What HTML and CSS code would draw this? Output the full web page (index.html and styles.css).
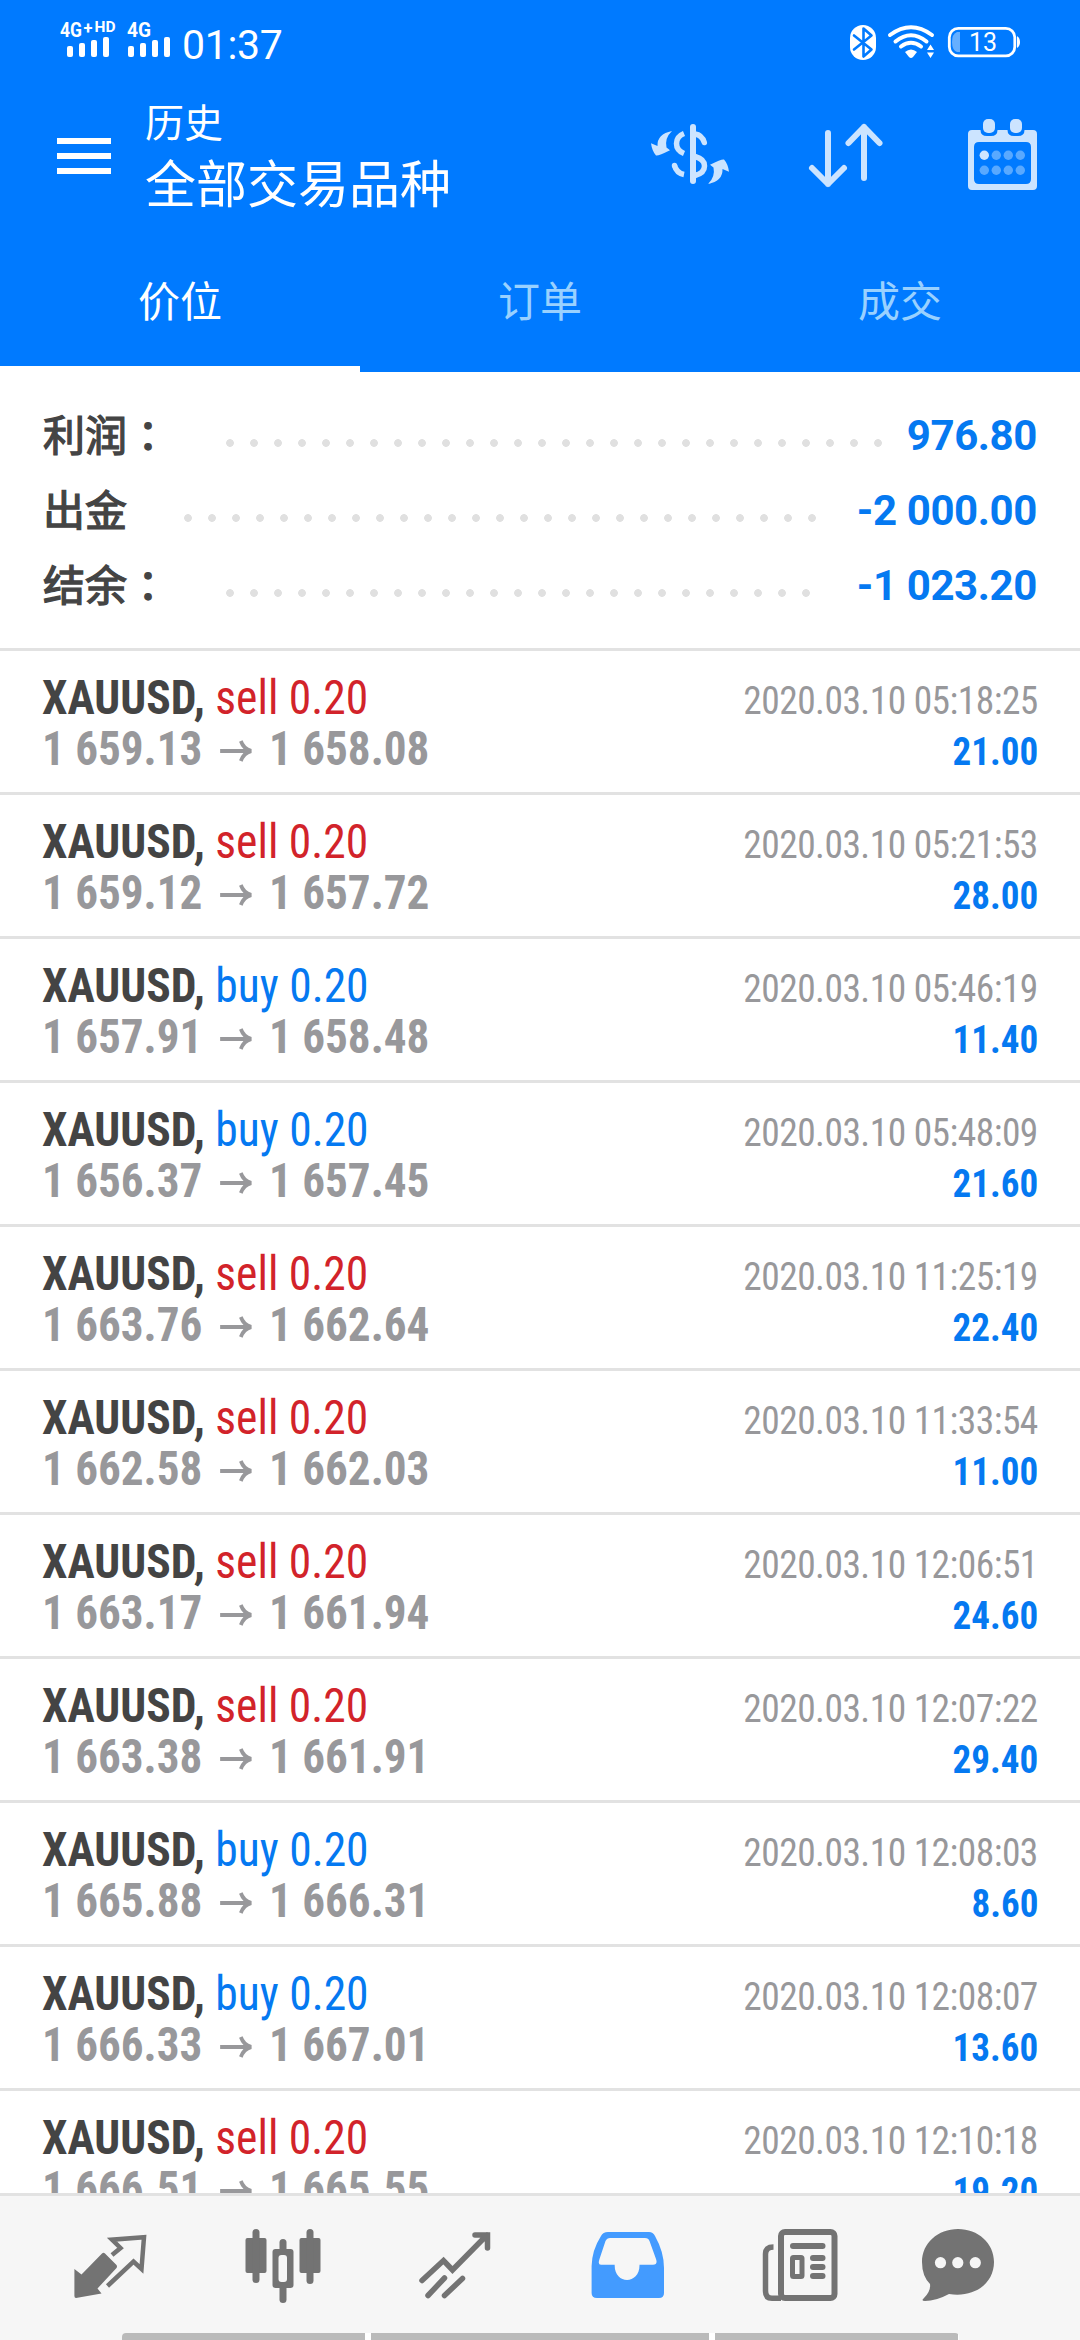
FILE: index.html
```html
<!DOCTYPE html>
<html lang="zh-CN">
<head>
<meta charset="utf-8">
<title>历史</title>
<link rel="stylesheet" href="styles.css">
</head>
<body>
<div class="screen">
  <header class="header">
    <div class="status">
      <svg class="signal" width="114" height="44" viewBox="58 16 114 44" fill="#fff">
        <g class="net">
          <text x="60" y="37" font-size="20" textLength="22" lengthAdjust="spacingAndGlyphs">4G</text>
          <text x="83.500" y="33.500" font-size="16" textLength="9" lengthAdjust="spacingAndGlyphs">+</text>
          <text x="94.500" y="32" font-size="14" textLength="21" lengthAdjust="spacingAndGlyphs">HD</text>
          <text x="127" y="37" font-size="20" textLength="24" lengthAdjust="spacingAndGlyphs">4G</text>
        </g>
        <rect x="67" y="46" width="6" height="11" rx="2"/><rect x="79" y="43" width="6" height="14" rx="2"/><rect x="91" y="40" width="6" height="17" rx="2"/><rect x="103" y="37" width="6" height="20" rx="2"/>
        <rect x="128" y="46" width="6" height="11" rx="2"/><rect x="140" y="43" width="6" height="14" rx="2"/><rect x="152" y="40" width="6" height="17" rx="2"/><rect x="164" y="37" width="6" height="20" rx="2"/>
      </svg>
      <span class="clock">01:37</span>
      <svg class="sys" width="174" height="40" viewBox="848 22 174 40">
        <rect x="850" y="25" width="26" height="35" rx="13" fill="#fff"/>
        <path d="M854 35.500 871.500 49.500 863.500 56.500V28.500L871.500 35.500 854 49.500" fill="none" stroke="#007aff" stroke-width="2.600" stroke-linejoin="round" stroke-linecap="round"/>
        <g fill="none" stroke="#fff" stroke-width="4" stroke-linecap="round"><path d="M890 35Q911 19.500 932 35"/><path d="M895.500 41.500Q911 29 926.500 41.500"/><path d="M901 46.500Q911 39 921 46.500"/></g>
        <path d="M905 52Q911 47 917 52L913 57Q911 59 909 57Z" fill="#fff"/>
        <path d="M927 50 930.500 44.500 934 50ZM927 52.500H934L930.500 58Z" fill="#fff"/>
        <rect x="949.300" y="28.300" width="65.500" height="27.500" rx="9" fill="none" stroke="#fff" stroke-width="2.800"/>
        <path d="M960 32V52H957Q952 50 952 42T957 32Z" fill="#fff" opacity=".4"/>
        <path d="M1017 36Q1020 38 1020 42T1017 48Z" fill="#fff"/>
        <text class="charge" x="983" y="51" text-anchor="middle">13</text>
      </svg>
    </div>
    <div class="appbar">
      <div class="menu"><i></i><i></i><i></i></div>
      <div class="titles">
        <div class="subtitle">历史</div>
        <div class="title">全部交易品种</div>
      </div>
      <div class="actions">
        <svg width="84" height="76" viewBox="648 117 84 76">
          <rect x="690" y="124" width="6" height="60" rx="3" fill="#cce4ff"/>
          <g fill="none" stroke="#cce4ff" stroke-width="5.500"><path d="M684 133.500Q676.500 136.500 676.500 143.500T684 153.500"/><path d="M695 134Q702 135 704.300 142.500" stroke-linecap="round"/><path d="M695 156.500Q704.500 159 704.500 166T695 175.500"/><path d="M684 174.500Q676.500 173 674.500 165.500"/></g>
          <circle cx="674.500" cy="165.500" r="2.700" fill="#cce4ff"/>
          <g fill="#cce4ff"><path id="swap" d="M672 131Q657 134 657.500 146L651 143.300Q652 151 656 155.500Q658 156.300 670 150.300L666.500 147.500Q664.500 138 672 131Z"/><use href="#swap" transform="rotate(180 690 157.500)"/></g>
        </svg>
        <svg width="80" height="76" viewBox="806 117 80 76" fill="none" stroke="#cce4ff" stroke-width="6" stroke-linecap="round" stroke-linejoin="round"><path d="M828 133V184M812 168 828 184 844 168M864 178V127M848.500 143 864 127 879.500 143"/></svg>
        <svg width="76" height="76" viewBox="965 117 76 76">
          <path fill="#cce4ff" fill-rule="evenodd" d="M972 130H1033Q1037 130 1037 134V186Q1037 190 1033 190H972Q968 190 968 186V134Q968 130 972 130ZM979 142Q974 142 974 147V179Q974 184 979 184H1026Q1031 184 1031 179V147Q1031 142 1026 142Z"/>
          <path fill="#007aff" d="M980.500 130H997.500Q997.500 136 991 136H987Q980.500 136 980.500 130ZM1007.500 130H1024.500Q1024.500 136 1018 136H1014Q1007.500 136 1007.500 130Z"/>
          <rect x="983" y="119" width="12" height="14" rx="5" fill="#cce4ff"/><rect x="1010" y="119" width="12" height="14" rx="5" fill="#cce4ff"/>
          <circle cx="984.300" cy="155.300" r="4.700" fill="#cce4ff"/>
          <g fill="#59a9ff"><circle cx="996.300" cy="155.300" r="4.700"/><circle cx="1008.300" cy="155.300" r="4.700"/><circle cx="1020.300" cy="155.300" r="4.700"/><circle cx="984.300" cy="170.300" r="4.700"/><circle cx="996.300" cy="170.300" r="4.700"/><circle cx="1008.300" cy="170.300" r="4.700"/><circle cx="1020.300" cy="170.300" r="4.700"/></g>
        </svg>
      </div>
    </div>
    <nav class="tabs"><div class="tab active">价位</div><div class="tab">订单</div><div class="tab">成交</div></nav>
  </header>

  <section class="summary">
    <div class="sum"><span class="label">利润<span class="colon" lang="zh-TW">：</span></span><span class="dots d28"></span><b>976.80</b></div>
    <div class="sum"><span class="label">出金</span><span class="dots d27"></span><b>-2 000.00</b></div>
    <div class="sum"><span class="label">结余<span class="colon" lang="zh-TW">：</span></span><span class="dots d25"></span><b>-1 023.20</b></div>
  </section>

  <main class="deals" id="deals"></main>

  <footer class="bottom">
    <nav class="nav">
      <svg width="80" height="80" viewBox="70 2226 80 80"><path fill="#737373" d="M74.400 2269 81.500 2274.500 102 2253.500Q103.500 2252 105 2253.500L116.500 2265Q117.500 2266.500 116.500 2268L97.500 2288.500 101.500 2293.500 76 2298Q74.400 2298 74.400 2296Z"/><path fill="none" stroke="#737373" stroke-width="4.500" d="M112 2255 120.500 2248 112 2239.700 144 2237.300 141.500 2269 133.500 2261.500 107.500 2286"/></svg>
      <svg width="80" height="80" viewBox="241.500 2226 80 80" fill="#737373"><rect x="244" y="2238" width="21" height="35" rx="2"/><rect x="251" y="2229" width="7" height="54" rx="3.500"/><rect x="298" y="2238" width="21" height="35" rx="2"/><rect x="305" y="2229" width="7" height="55" rx="3.500"/><rect x="278" y="2239" width="7" height="64" rx="3.500"/><rect x="271" y="2249" width="21" height="39" rx="3"/><rect x="277" y="2255" width="8.500" height="27" rx="3" fill="#f6f6f6"/></svg>
      <svg width="80" height="80" viewBox="414 2226 80 80" fill="none" stroke="#737373" stroke-width="5.500"><g stroke-linecap="round"><path d="M421 2280.500 442.500 2260.500 451.500 2270 486 2235M474 2235H486.500V2248"/><path d="M427 2295.500 443.500 2278M443.500 2295.500 461.500 2278.500"/></g></svg>
      <svg width="80" height="80" viewBox="587 2226 80 80"><path fill="#439bff" fill-rule="evenodd" d="M607 2232H648Q652 2232 654 2236Q663 2252 663 2268V2293Q663 2298 658 2298H596Q590.600 2298 590.600 2293V2266Q591 2250 600 2236Q602 2232 607 2232ZM609 2238Q606 2238 604.500 2241L598.500 2259Q596.500 2264.700 600 2264.700H613.700C613 2285 639 2285 638.500 2264.700H652Q657 2264.700 655 2259L648.500 2241Q647.500 2238 644 2238Z"/></svg>
      <svg width="80" height="80" viewBox="760 2226 80 80"><g fill="none" stroke="#737373"><rect x="781" y="2232" width="53.500" height="66" rx="4" stroke-width="6"/><path d="M773.500 2247Q765.500 2247 765.500 2254V2291Q765.500 2298.300 772 2298.300H781" stroke-width="5.500"/><rect x="792.500" y="2257.500" width="9.500" height="19" rx="1" stroke-width="5"/></g><g fill="#737373"><rect x="790" y="2243" width="35.500" height="6" rx="3"/><rect x="810" y="2255" width="15.500" height="6" rx="3"/><rect x="810" y="2264" width="15.500" height="6" rx="3"/><rect x="810" y="2273" width="15.500" height="6" rx="3"/></g></svg>
      <svg width="80" height="80" viewBox="918 2226 80 80"><path fill="#737373" d="M958 2229C978 2229 994 2243 994 2262C994 2283 975 2298 949 2294Q936 2301 925 2301Q920.500 2301 924 2298Q931 2291 930 2284Q922 2276 922 2262C922 2243 938 2229 958 2229Z"/><g fill="#f6f6f6"><circle cx="940.500" cy="2262.700" r="5.600"/><circle cx="957.800" cy="2262.700" r="5.600"/><circle cx="975.300" cy="2262.700" r="5.600"/></g></svg>
    </nav>
    <div class="gesture"><i></i><i></i><i></i></div>
  </footer>
</div>
<script src="deals.js"></script>
</body>
</html>
```
FILE: styles.css
```css
* { box-sizing: border-box; }
body { margin: 0; background: #fff; font-family: Roboto, "Noto Sans CJK SC", sans-serif; }
svg { display: block; flex: none; overflow: visible; }
.screen { width: 1080px; height: 2340px; display: flex; flex-direction: column; overflow: hidden; background: #fff; }

.header { height: 372px; flex: none; background: #007aff; color: #fff; display: flex; flex-direction: column; }
.status { height: 84px; display: flex; align-items: flex-start; padding: 16px 58px 0; }
.clock { font-size: 41px; line-height: 48px; margin: 5px 0 0 10px; letter-spacing: -0.3px; }
.sys { margin: 6px 0 0 auto; }
.net { font-weight: 700; }
.charge { font-size: 25px; fill: #fff; }

.appbar { height: 144px; display: flex; align-items: flex-start; padding: 0 39px 0 57px; }
.menu { width: 54px; margin-top: 54px; display: flex; flex-direction: column; gap: 9px; }
.menu i { height: 6px; background: #fff; }
.titles { margin-left: 34px; padding-top: 16px; }
.subtitle { font-size: 39px; line-height: 48px; }
.title { font-size: 51px; line-height: 76px; }
.actions { margin: 33px 0 0 auto; display: flex; }
.actions svg + svg { margin-left: 74px; }
.actions svg:last-child { margin-left: 79px; }

.tabs { flex: 1; display: grid; grid-template-columns: repeat(3, 1fr); }
.tab { text-align: center; font-size: 42px; line-height: 60px; padding-top: 45px; color: #99d1ff; }
.tab.active { color: #fff; border-bottom: 6px solid #fff; }

.summary { height: 276px; flex: none; padding: 26px 43px 0; }
.sum { height: 75px; display: flex; align-items: center; color: #444; font-size: 42px; line-height: 75px; }
.label { font-family: "Noto Sans CJK SC", sans-serif; margin-top: -6px; -webkit-text-stroke: 1.300px #444; }
.colon { font-family: "Noto Sans CJK TC", sans-serif; position: relative; top: 1px; }
.dots { height: 8px; margin: 15px 0 0 57px; background: radial-gradient(circle at 4px 4px, #e0e0e0 3.500px, transparent 4.200px) 0 0 / 24px 8px repeat-x; }
.d28 { width: 656px; }
.d27 { width: 632px; }
.d25 { width: 584px; }
.sum b { margin-left: auto; color: #0579f1; font-weight: 700; letter-spacing: -0.400px; }

.deals { flex: 1; min-height: 0; overflow: hidden; font-family: "Roboto Condensed", Roboto, sans-serif; font-stretch: 75%; }
.deal { height: 144px; border-top: 3px solid #e2e2e2; padding: 19px 42px 0; }
.line { display: flex; justify-content: space-between; height: 51px; line-height: 56px; font-size: 48px; white-space: nowrap; }
.name, .prices { transform-origin: left; }
.name { transform: scaleX(.948); }
.name b { color: #444; font-weight: 700; }
.sell { color: #d2232a; }
.buy { color: #0579f1; }
.prices { color: #98989b; font-weight: 700; transform: scaleX(.94); }
.arrow { width: 36px; height: 24px; display: inline-block; margin: 0 17px 0 18px; }
.date, .profit { font-size: 39px; line-height: 62px; transform-origin: right; }
.date { color: #98989b; letter-spacing: -0.550px; transform: scaleX(.96); }
.profit { font-weight: 700; color: #0579f1; transform: scaleX(.95); }

.bottom { height: 147px; flex: none; background: #f6f6f6; border-top: 3px solid #e2e2e2; display: flex; flex-direction: column; }
.nav { flex: 1; display: grid; grid-template-columns: repeat(5, 172.500px) 143px; justify-items: center; padding: 30px 0 0 24px; }
.gesture { height: 7px; display: flex; gap: 6px; margin: 0 121px 0 122px; background: #fff; border-radius: 4px 4px 0 0; overflow: hidden; }
.gesture i { background: #bababa; width: 243px; }
.gesture i:nth-child(2) { width: 338px; }
```
FILE: deals.js
```js
const deals = [
  ["sell", "1 659.13", "1 658.08", "05:18:25", "21.00"],
  ["sell", "1 659.12", "1 657.72", "05:21:53", "28.00"],
  ["buy", "1 657.91", "1 658.48", "05:46:19", "11.40"],
  ["buy", "1 656.37", "1 657.45", "05:48:09", "21.60"],
  ["sell", "1 663.76", "1 662.64", "11:25:19", "22.40"],
  ["sell", "1 662.58", "1 662.03", "11:33:54", "11.00"],
  ["sell", "1 663.17", "1 661.94", "12:06:51", "24.60"],
  ["sell", "1 663.38", "1 661.91", "12:07:22", "29.40"],
  ["buy", "1 665.88", "1 666.31", "12:08:03", "8.60"],
  ["buy", "1 666.33", "1 667.01", "12:08:07", "13.60"],
  ["sell", "1 666.51", "1 665.55", "12:10:18", "19.20"]
];
const arrow = '<svg class="arrow" viewBox="0 0 35 24" fill="none" stroke="#98989b" stroke-width="4"><path d="M0 10H32M22 0Q25 8 33 10Q25 12 22 20"/></svg>';
document.getElementById("deals").innerHTML = deals.map(([side, from, to, time, profit]) => `
  <article class="deal">
    <div class="line"><span class="name"><b>XAUUSD,</b> <span class="${side}">${side} 0.20</span></span><span class="date">2020.03.10 ${time}</span></div>
    <div class="line"><span class="prices">${from}${arrow}${to}</span><span class="profit">${profit}</span></div>
  </article>`).join("");
```
